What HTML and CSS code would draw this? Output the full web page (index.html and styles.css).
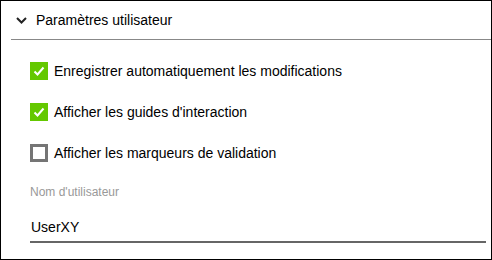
FILE: index.html
```html
<!DOCTYPE html>
<html lang="fr">
<head>
  <meta charset="UTF-8">
  <title>Paramètres utilisateur</title>
  <link rel="stylesheet" href="styles.css">
</head>
<body>
  <div class="panel">
    <div class="panel-header">
      <svg class="chevron" width="11" height="7" viewBox="0 0 11 7">
        <path d="M1 1 L5.5 5.5 L10 1" fill="none" stroke="#222" stroke-width="2"/>
      </svg>
      <span class="panel-title">Paramètres utilisateur</span>
    </div>

    <div class="panel-body">
      <label class="check-row">
        <span class="box checked">
          <svg width="14" height="14" viewBox="0 0 14 14">
            <path d="M2.5 7.5 L5.5 10.5 L11.5 3.5" fill="none" stroke="#fff" stroke-width="2"/>
          </svg>
        </span>
        Enregistrer automatiquement les modifications
      </label>
      <label class="check-row">
        <span class="box checked">
          <svg width="14" height="14" viewBox="0 0 14 14">
            <path d="M2.5 7.5 L5.5 10.5 L11.5 3.5" fill="none" stroke="#fff" stroke-width="2"/>
          </svg>
        </span>
        Afficher les guides d'interaction
      </label>
      <label class="check-row">
        <span class="box"></span>
        Afficher les marqueurs de validation
      </label>

      <div class="field">
        <div class="field-label">Nom d'utilisateur</div>
        <div class="field-input">UserXY</div>
      </div>
    </div>
  </div>
</body>
</html>
```

FILE: styles.css
```css
body {
  margin: 0;
  padding: 0;
  font-family: "Liberation Sans", Arial, sans-serif;
  color: #000;
  background: #fff;
}
.panel {
  width: 490px;
  height: 258px;
  border: 1px solid #000;
}
.panel-header {
  display: flex;
  align-items: center;
  height: 38px;
  margin-left: 10px;
  padding-left: 5px;
  border-bottom: 1px solid #888;
}
.chevron {
  margin-right: 9px;
}
.panel-title {
  font-size: 14px;
}
.panel-body {
  padding: 10px 5px 0 29px;
}
.check-row {
  display: flex;
  align-items: center;
  height: 41px;
  font-size: 14px;
  cursor: pointer;
}
.box {
  display: flex;
  align-items: center;
  justify-content: center;
  width: 18px;
  height: 18px;
  margin-right: 6px;
  box-sizing: border-box;
  border: 3px solid #757575;
}
.box.checked {
  background: #64c800;
  border: none;
}
.field {
  margin-top: 12px;
}
.field-label {
  font-size: 12px;
  color: #999;
}
.field-input {
  font-size: 14px;
  padding: 20px 0 6px 1px;
  border-bottom: 2px solid #666;
}
```
